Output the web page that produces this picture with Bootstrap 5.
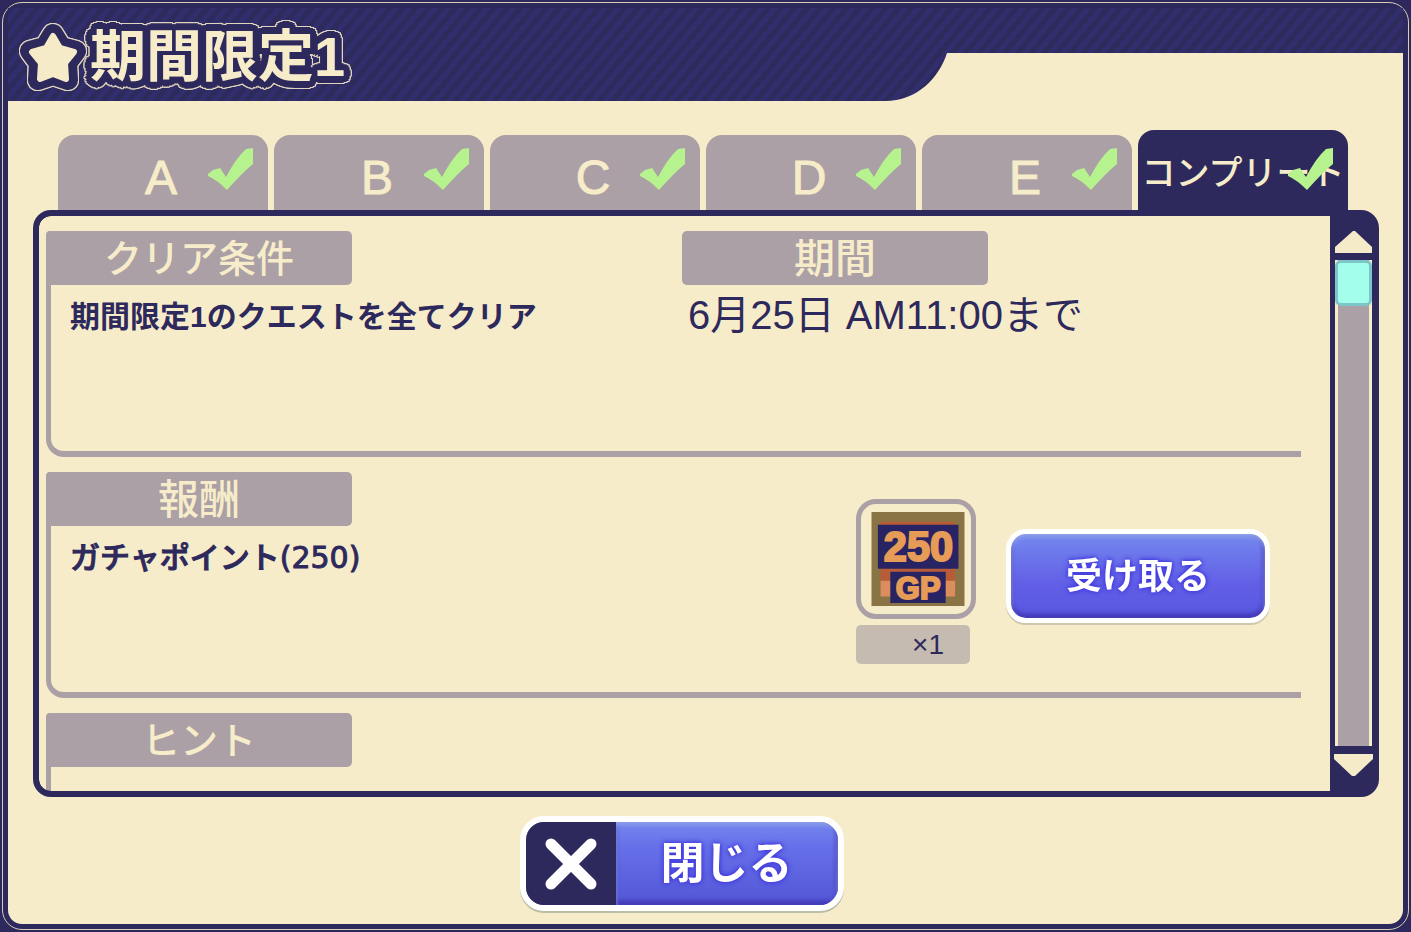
<!DOCTYPE html>
<html lang="ja">
<head>
<meta charset="utf-8">
<meta name="viewport" content="width=device-width, initial-scale=1">
<title>期間限定1</title>
<link href="https://cdn.jsdelivr.net/npm/bootstrap@5.3.0/dist/css/bootstrap.min.css" rel="stylesheet">
<style>
:root { --navy: #2d295c; --cream: #f7ecca; --mauve: #aba0a5; }
body { background: var(--navy); color: var(--navy); font-family: "Liberation Sans", "Noto Sans CJK JP", sans-serif; line-height: 1; }
.screen { height: 100vh; padding: 2px; }
.dialog { border: 1px solid #d8cdb6; border-radius: 20px; padding: 5px; background: var(--navy); }
.dialog-inner { background: var(--cream); border-radius: 0 0 14px 14px; }
.ribbon { height: 93px; background: repeating-linear-gradient(130deg, #2d2a5c 0 5px, #322d6d 5px 10px); }
.ribbon-title { flex: 870 1 0; padding: 4px 0 0 20px; }
.ribbon-rest { flex: 463 1 0; background: var(--cream); height: 48px; }
.ribbon-curve { width: 62px; height: 48px; flex: none; }
.ribbon h1 { font-size: 56px; font-weight: 700; line-height: 64px; gap: 12px; color: var(--cream);
  filter: drop-shadow(1px 0 0 #e0d5bd) drop-shadow(-1px 0 0 #e0d5bd) drop-shadow(0 1px 0 #e0d5bd) drop-shadow(0 -1px 0 #e0d5bd); }
.ribbon h1 span { text-shadow:
  3px 0 var(--navy), -3px 0 var(--navy), 0 3px var(--navy), 0 -3px var(--navy), 3px 3px var(--navy), -3px 3px var(--navy), 3px -3px var(--navy), -3px -3px var(--navy),
  7px 0 var(--navy), -7px 0 var(--navy), 0 7px var(--navy), 0 -7px var(--navy), 5px 5px var(--navy), -5px 5px var(--navy), 5px -5px var(--navy), -5px -5px var(--navy),
  6px 3px var(--navy), -6px 3px var(--navy), 6px -3px var(--navy), -6px -3px var(--navy), 3px 6px var(--navy), -3px 6px var(--navy), 3px -6px var(--navy), -3px -6px var(--navy); }
.ribbon h1 svg { width: 50px; height: 50px; overflow: visible; }
.tab-row { padding: 29px 55px 0 50px; gap: 6px; height: 109px; }
.tab-row button { flex: 1 1 0; min-width: 0; border: 0; border-radius: 16px 16px 0 0; background: var(--mauve); color: var(--cream); font-size: 48px; -webkit-text-stroke: 1px var(--cream); height: 75px; padding: 10px 4px 0 0; }
.tab-row button.active { background: var(--navy); font-size: 34px; font-weight: 500; -webkit-text-stroke: 0; height: 80px; padding: 6px 2px 0; white-space: nowrap; }
.tab-row svg { position: absolute; right: 15px; bottom: 20px; width: 45px; height: 42px; }
.panel { margin: 0 24px 0 25px; border: 6px solid var(--navy); border-radius: 18px; background: var(--navy); }
.panel-body { overflow-y: auto; scrollbar-width: none; padding: 15px 29px 14px 7px; background: var(--cream); border-radius: 12px 0 0 12px; }
.panel-body::-webkit-scrollbar { display: none; }
.block { min-height: 226px; margin-bottom: 15px; border-left: 5px solid var(--mauve); border-bottom: 6px solid var(--mauve); border-radius: 4px 0 0 18px; }
.block-main { flex: 631 1 0; }
.block-side { flex: 619 1 0; }
.tag { width: 306px; height: 54px; line-height: 56px; background: var(--mauve); color: var(--cream); border-radius: 5px; font-size: 38px; font-weight: 500; text-align: center; margin: 0; }
.tag-edge { margin-left: -5px; }
.tag-kanji { font-size: 41px; }
.copy { font-size: 30px; line-height: 40px; font-weight: 700; padding: 12px 0 0 19px; margin: 0; }
.copy-wide { font-family: "DejaVu Sans", "Noto Sans CJK JP", sans-serif; font-weight: 500; -webkit-text-stroke: 1px var(--navy); }
.copy-date { font-size: 40px; font-weight: 400; padding: 10px 0 0 6px; }
.reward { gap: 30px; padding: 27px 31px 0 0; }
.item-frame { width: 120px; height: 120px; padding-left: 3px; border: 5px solid var(--mauve); border-radius: 20px; }
.item-frame svg { width: 94px; height: 94px; }
.item-count { width: 114px; height: 39px; line-height: 40px; margin-top: 6px; padding-right: 26px; text-align: right; background: #c6bbb1; border-radius: 5px; font-size: 28px; }
.gloss { border: 5px solid #fff; border-radius: 20px; color: #fff; font-weight: 700; padding: 0; line-height: 1; overflow: hidden;
  background: linear-gradient(#7488ee, #625fe6 60%, #5857e0) padding-box; text-shadow: 0 0 5px #4238df, 0 0 5px #4238df; }
.gloss-shade { box-shadow: inset 0 3px 4px #91a5ec, inset 0 -4px 5px #4136b5, inset -2px 0 4px #4945b8; }
.claim { width: 264px; height: 94px; padding-top: 2px; font-size: 36px; margin-top: 30px; filter: drop-shadow(0 2px 0 #cfc8b0); }
.shut { width: 324px; height: 95px; font-size: 44px; border-width: 6px; border-radius: 24px; filter: drop-shadow(0 2px 0 #b9bfa9); background: linear-gradient(#7585ee, #6670e9 30%, #5356d6) padding-box; }
.shut-icon { width: 90px; background: var(--navy); }
.shut-icon svg { width: 54px; height: 54px; }
.footer-row { padding: 19px 48px 13px 0; }
.rail { width: 43px; padding: 15px 0 15px 4px; }
.rail button { border: 0; background: none; padding: 0; line-height: 0; }
.rail svg { width: 39px; height: 22px; }
.track { width: 37px; background: var(--mauve); border: solid var(--cream); border-width: 0 3px; margin: 7px 0 8px; }
.thumb { height: 46px; margin: 0 -3px; background: #a3ffec; border: 3px solid #7dc6c7; border-radius: 6px; }
</style>
</head>
<body>
<svg class="d-none" aria-hidden="true">
  <symbol id="tick" viewBox="0 0 45 42"><path fill="#b6f28e" d="M0 26 5 22 12 20 18 29Q28 10 38 1L45 0V16Q35 24 19 42Q9 32 0 28Z"/></symbol>
</svg>
<div class="screen">
<main class="dialog h-100">
<div class="dialog-inner h-100 d-flex flex-column overflow-hidden">
  <header class="ribbon d-flex align-items-end flex-shrink-0">
    <div class="ribbon-title h-100 d-flex align-items-center">
      <h1 class="m-0 d-flex align-items-center text-nowrap">
        <svg viewBox="0 0 50 50" aria-hidden="true"><path d="M25 2 33 15 48 19 39 31 40 48 25 43 10 48 11 31 2 19 17 15Z" fill="none" stroke="#2d295c" stroke-width="20" stroke-linejoin="round"/><path d="M25 4 32 16 46 20 37 31 38 47 25 42 12 47 13 31 4 20 18 16Z" fill="#f6ebc9" stroke="#f6ebc9" stroke-width="6" stroke-linejoin="round"/></svg>
        <span>期間限定1</span>
      </h1>
    </div>
    <svg class="ribbon-curve" viewBox="0 0 62 48" preserveAspectRatio="none" aria-hidden="true"><path fill="#f7ecca" d="M62 0C54 25 32 48 0 48H62Z"/></svg>
    <div class="ribbon-rest"></div>
  </header>
  <nav class="tab-row d-flex align-items-end flex-shrink-0" aria-label="クエスト">
    <button type="button" class="position-relative">A<svg aria-hidden="true"><use href="#tick"/></svg></button>
    <button type="button" class="position-relative">B<svg aria-hidden="true"><use href="#tick"/></svg></button>
    <button type="button" class="position-relative">C<svg aria-hidden="true"><use href="#tick"/></svg></button>
    <button type="button" class="position-relative">D<svg aria-hidden="true"><use href="#tick"/></svg></button>
    <button type="button" class="position-relative">E<svg aria-hidden="true"><use href="#tick"/></svg></button>
    <button type="button" class="position-relative active" aria-current="true">コンプリート<svg aria-hidden="true"><use href="#tick"/></svg></button>
  </nav>
  <div class="panel d-flex flex-fill overflow-hidden">
    <div class="panel-body flex-fill">
      <section class="block d-flex">
        <div class="block-main">
          <h2 class="tag tag-edge">クリア条件</h2>
          <p class="copy">期間限定1のクエストを全てクリア</p>
        </div>
        <div class="block-side">
          <h2 class="tag tag-kanji">期間</h2>
          <p class="copy copy-date">6月25日 AM11:00まで</p>
        </div>
      </section>
      <section class="block d-flex justify-content-between">
        <div>
          <h2 class="tag tag-edge tag-kanji">報酬</h2>
          <p class="copy copy-wide">ガチャポイント(250)</p>
        </div>
        <div class="reward d-flex align-items-start">
          <div>
            <div class="item-frame d-flex align-items-center justify-content-center">
              <svg viewBox="97 97 277 280" role="img" aria-label="250 GP">
                <path fill="#8a7344" d="M97 97H374V377H97Z"/>
                <path fill="#b85c38" d="M124 126H346V302H124Z"/>
                <path fill="#dc8d5d" d="M124 302H346V349H124Z"/>
                <path fill="#282363" d="M116 135H356V266H116ZM153 275H318V368H153Z"/>
                <g fill="#e69b57" stroke="#e69b57" stroke-width="6" font-family="Liberation Sans" font-weight="700" text-anchor="middle">
                  <text x="237" y="244" font-size="124">250</text>
                  <text x="236" y="356" font-size="92">GP</text>
                </g>
              </svg>
            </div>
            <div class="item-count">×1</div>
          </div>
          <button type="button" class="btn gloss gloss-shade claim">受け取る</button>
        </div>
      </section>
      <section class="block">
        <h2 class="tag tag-edge">ヒント</h2>
      </section>
    </div>
    <div class="rail d-flex flex-column align-items-center flex-shrink-0">
      <button type="button" aria-label="上へ"><svg viewBox="0 0 39 22"><path fill="#f6ebc9" d="M19 0h2L38 16v6H1v-6Z"/></svg></button>
      <div class="track flex-fill"><div class="thumb"></div></div>
      <button type="button" aria-label="下へ"><svg viewBox="0 0 39 22"><path fill="#f6ebc9" d="M0 0h39v5L21 22h-3L0 5Z"/></svg></button>
    </div>
  </div>
  <footer class="footer-row d-flex justify-content-center flex-shrink-0">
    <button type="button" class="btn gloss shut d-flex align-items-stretch">
      <span class="shut-icon d-flex align-items-center justify-content-center"><svg viewBox="0 0 54 54" aria-hidden="true"><path d="M7 7 47 47M47 7 7 47" fill="none" stroke="#fff" stroke-width="11" stroke-linecap="round"/></svg></span>
      <span class="gloss-shade flex-fill d-flex align-items-center justify-content-center">閉じる</span>
    </button>
  </footer>
</div>
</main>
</div>
<script src="https://cdn.jsdelivr.net/npm/bootstrap@5.3.0/dist/js/bootstrap.bundle.min.js"></script>
</body>
</html>
